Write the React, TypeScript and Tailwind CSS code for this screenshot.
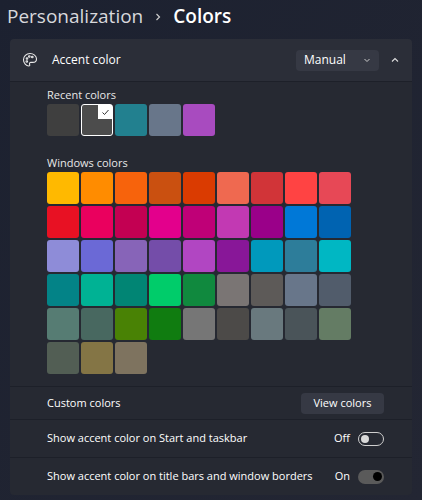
import React from "react";

const rows = [
  ["#FFB900","#FF8C00","#F7630C","#CA5010","#DA3B01","#EF6950","#D13438","#FF4343","#E74856"],
  ["#E81123","#EA005E","#C30052","#E3008C","#BF0077","#C239B3","#9A0089","#0078D7","#0063B1"],
  ["#8E8CD8","#6B69D6","#8764B8","#744DA9","#B146C2","#881798","#0099BC","#2D7D9A","#00B7C3"],
  ["#038387","#00B294","#018574","#00CC6A","#10893E","#7A7574","#5D5A58","#68768A","#515C6B"],
  ["#567C73","#486860","#498205","#107C10","#767676","#4C4A48","#69797E","#4A5459","#647C64"],
  ["#525E54","#847545","#7E735F"],
];

export default function App() {
  return (
    <div className="w-[422px] h-[500px] overflow-hidden bg-gradient-to-br from-[#1c2130] to-[#232633] text-white" style={{ fontFamily: '"Segoe UI", "Open Sans", "Noto Sans", sans-serif' }}>
      <div className="flex items-center h-[33px] pl-[7px] text-[19px]">
        <span className="text-[#d8d8dc]">Personalization</span>
        <svg width="10" height="10" viewBox="0 0 10 10" className="mx-[10px]"><path d="M3.5 2l3 3-3 3" stroke="#ccc" strokeWidth="1.2" fill="none"/></svg>
        <span className="font-semibold">Colors</span>
      </div>
      <div className="mx-[10px] mt-[6px] rounded-[4px] overflow-hidden">
        <div className="h-[42px] bg-[#2b2e38] flex items-center pl-[12px] pr-[12px] text-[12px]">
          <svg width="16" height="16" viewBox="0 0 16 16" fill="none" stroke="#e8e8e8" strokeWidth="1.1">
            <path d="M8 1.5C4.3 1.5 1.5 4.3 1.5 7.7c0 3.3 2.7 6.3 5.3 6.3.9 0 1.2-.8.8-1.6-.5-1 .2-2 1.3-2h1.8c2 0 3.8-1.3 3.8-3.5C14.5 3.9 11.5 1.5 8 1.5z"/>
            <circle cx="5" cy="6.5" r=".8"/><circle cx="7.3" cy="4.5" r=".8"/><circle cx="10.3" cy="5" r=".8"/><circle cx="4.8" cy="9.5" r=".8"/>
          </svg>
          <span className="ml-[14px] flex-1">Accent color</span>
          <div className="w-[83px] h-[21px] rounded-[4px] bg-[#363944] flex items-center justify-between px-[8px]">
            <span>Manual</span>
            <svg width="8" height="8" viewBox="0 0 8 8"><path d="M1.5 3l2.5 2.5L6.5 3" stroke="#ccc" fill="none"/></svg>
          </div>
          <svg width="10" height="10" viewBox="0 0 10 10" className="ml-[11px]"><path d="M2 6.5l3-3 3 3" stroke="#ddd" strokeWidth="1.1" fill="none"/></svg>
        </div>
        <div className="bg-[#262932] border-t border-[#1d2029] pl-[37px] pt-[6px] pb-[12px] text-[11px] leading-[14px]">
          <div className="text-[#e8e8e8]">Recent colors</div>
          <div className="flex gap-[2px] mt-[2px]">
            <div className="w-[32px] h-[32px] rounded-[3px] bg-[#3f3f3f]" />
            <div className="relative w-[32px] h-[32px] rounded-[3px] bg-[#4c4c4c] border border-white">
              <div className="absolute top-0 right-0 w-[14px] h-[14px] bg-white flex items-center justify-center">
                <svg width="9" height="9" viewBox="0 0 9 9"><path d="M1.5 4.5l2 2 4-4.5" stroke="#333" strokeWidth="1" fill="none"/></svg>
              </div>
            </div>
            <div className="w-[32px] h-[32px] rounded-[3px] bg-[#22808f]" />
            <div className="w-[32px] h-[32px] rounded-[3px] bg-[#68768a]" />
            <div className="w-[32px] h-[32px] rounded-[3px] bg-[#a84bbf]" />
          </div>
          <div className="text-[#e8e8e8] mt-[20px]">Windows colors</div>
          <div className="flex flex-col gap-[2px] mt-[2px]">
            {rows.map((r, i) => (
              <div key={i} className="flex gap-[2px]">
                {r.map((c) => (
                  <div key={c} className="w-[32px] h-[32px] rounded-[3px]" style={{ backgroundColor: c }} />
                ))}
              </div>
            ))}
          </div>
        </div>
        <div className="h-[33px] bg-[#262932] border-t border-[#1d2029] flex items-center pl-[37px] pr-[28px] text-[11px]">
          <span className="flex-1">Custom colors</span>
          <div className="w-[83px] h-[21px] rounded-[4px] bg-[#363944] flex items-center justify-center">View colors</div>
        </div>
        <div className="h-[38px] bg-[#262932] border-t border-[#1d2029] flex items-center pl-[37px] pr-[28px] text-[11px]">
          <span className="flex-1">Show accent color on Start and taskbar</span>
          <span className="mr-[8px]">Off</span>
          <div className="w-[26px] h-[14px] rounded-full border border-[#cfcfcf] flex items-center px-[2px]">
            <div className="w-[8px] h-[8px] rounded-full bg-[#d8d8d8]" />
          </div>
        </div>
        <div className="h-[38px] bg-[#262932] border-t border-[#1d2029] flex items-center pl-[37px] pr-[28px] text-[11px]">
          <span className="flex-1">Show accent color on title bars and window borders</span>
          <span className="mr-[8px]">On</span>
          <div className="w-[26px] h-[14px] rounded-full bg-[#5a5a5a] flex items-center justify-end px-[2px]">
            <div className="w-[9px] h-[9px] rounded-full bg-black" />
          </div>
        </div>
      </div>
    </div>
  );
}
